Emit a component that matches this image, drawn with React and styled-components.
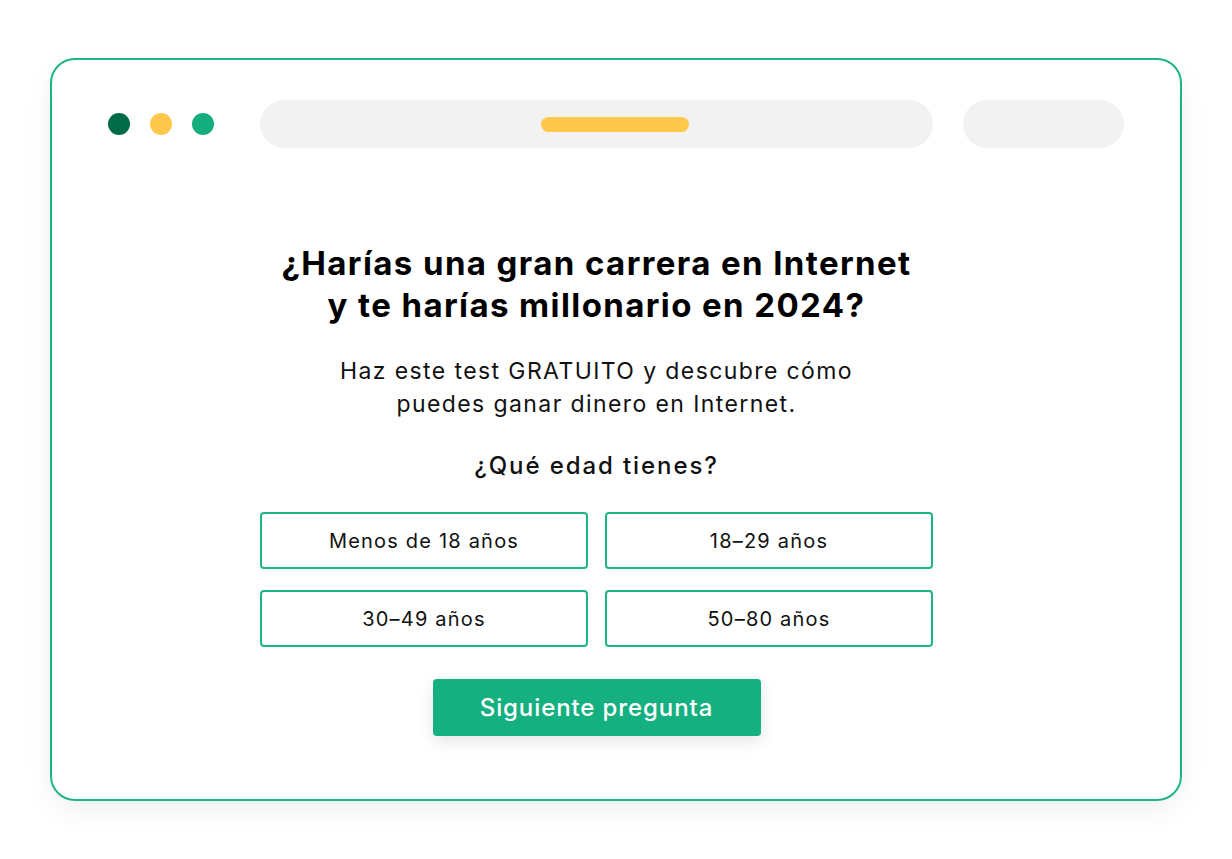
import React, { useState } from "react";
import styled, { createGlobalStyle } from "styled-components";

const GlobalStyle = createGlobalStyle`
  html, body {
    margin: 0;
    padding: 0;
    background: #ffffff;
  }
  body {
    font-family: "Inter", "Noto Sans", sans-serif;
    color: #111111;
  }
`;

const ages = ["Menos de 18 años", "18–29 años", "30–49 años", "50–80 años"];

const App = () => {
  const [selected, setSelected] = useState(null);

  return (
    <>
      <GlobalStyle />
      <Page>
        <Window>
          <TopBar>
            <Dots>
              <Dot $color="#006b47" />
              <Dot $color="#ffc84a" />
              <Dot $color="#14ad7d" />
            </Dots>
            <AddressBar>
              <Loader />
            </AddressBar>
            <SidePill />
          </TopBar>

          <Content>
            <Title>
              ¿Harías una gran carrera en Internet
              <br />
              y te harías millonario en 2024?
            </Title>
            <Lead>
              Haz este test GRATUITO y descubre cómo
              <br />
              puedes ganar dinero en Internet.
            </Lead>
            <Question>¿Qué edad tienes?</Question>
            <Options>
              {ages.map((age, i) => (
                <Option key={age} $active={selected === i} onClick={() => setSelected(i)}>
                  {age}
                </Option>
              ))}
            </Options>
            <NextButton>Siguiente pregunta</NextButton>
          </Content>
        </Window>
      </Page>
    </>
  );
};

const Page = styled.div`
  width: 1232px;
  height: 859px;
  padding: 58px 0 0 50px;
  box-sizing: border-box;
`;

const Window = styled.div`
  width: 1132px;
  height: 743px;
  box-sizing: border-box;
  border: 2px solid #1db584;
  border-radius: 25px;
  background: #ffffff;
  box-shadow: 0 10px 30px rgba(0, 0, 0, 0.06);
  padding: 40px 56px 0 56px;
`;

const TopBar = styled.div`
  display: flex;
  align-items: center;
`;

const Dots = styled.div`
  display: flex;
  gap: 20px;
  width: 106px;
  margin-right: 46px;
`;

const Dot = styled.span`
  width: 22px;
  height: 22px;
  border-radius: 50%;
  background: ${(p) => p.$color};
`;

const AddressBar = styled.div`
  width: 673px;
  height: 48px;
  box-sizing: border-box;
  padding-left: 281px;
  border-radius: 24px;
  background: #f2f2f2;
  display: flex;
  align-items: center;
`;

const Loader = styled.span`
  width: 148px;
  height: 15px;
  border-radius: 8px;
  background: #ffc84a;
`;

const SidePill = styled.div`
  width: 161px;
  height: 48px;
  margin-left: 30px;
  border-radius: 24px;
  background: #f2f2f2;
`;

const Content = styled.div`
  width: 673px;
  margin-left: 152px;
  margin-top: 94px;
  display: flex;
  flex-direction: column;
  align-items: center;
  text-align: center;
`;

const Title = styled.h1`
  margin: 0;
  font-size: 33px;
  line-height: 42px;
  font-weight: 700;
  color: #000000;
  letter-spacing: 1.4px;
  white-space: nowrap;
`;

const Lead = styled.p`
  margin: 29px 0 0;
  font-size: 23px;
  line-height: 33px;
  font-weight: 400;
  color: #111111;
  letter-spacing: 1.4px;
  white-space: nowrap;
`;

const Question = styled.h2`
  margin: 30px 0 0;
  font-size: 24px;
  line-height: 30px;
  font-weight: 500;
  color: #111111;
  letter-spacing: 1.9px;
`;

const Options = styled.div`
  width: 100%;
  margin-top: 31px;
  display: grid;
  grid-template-columns: 1fr 1fr;
  column-gap: 17px;
  row-gap: 21px;
`;

const Option = styled.button`
  height: 57px;
  box-sizing: border-box;
  border: 2px solid ${(p) => (p.$active ? "#0e9a6c" : "#1db584")};
  border-radius: 4px;
  background: ${(p) => (p.$active ? "#e9f8f2" : "#ffffff")};
  font-family: inherit;
  font-size: 20px;
  letter-spacing: 1.2px;
  color: #111111;
  cursor: pointer;
`;

const NextButton = styled.button`
  margin-top: 32px;
  width: 328px;
  height: 57px;
  border: none;
  border-radius: 4px;
  background: #15b07f;
  color: #ffffff;
  font-family: inherit;
  font-size: 24px;
  font-weight: 500;
  letter-spacing: 0.9px;
  box-shadow: 0 6px 16px rgba(0, 0, 0, 0.1);
  cursor: pointer;
`;

export default App;
